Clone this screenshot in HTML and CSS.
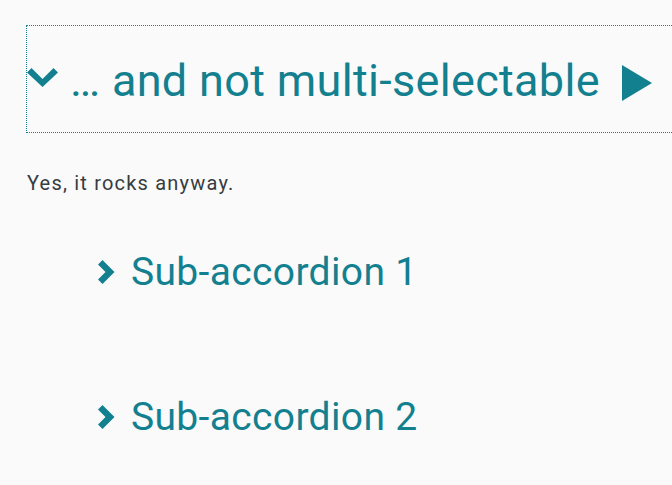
FILE: index.html
```html
<!DOCTYPE html>
<html>
<head>
<meta charset="utf-8">
<link rel="stylesheet" href="styles.css">
</head>
<body>
<div class="page">
  <div class="accordion">
    <h2 class="acc-header">
      <svg class="chev-down" width="31" height="19" viewBox="0 0 31 19"><path d="M0 4.5 L4.5 0 L15.5 11 L26.5 0 L31 4.5 L15.5 19 Z" fill="#13808f"/></svg>
      <span class="acc-title">… and not multi-selectable</span>
      <svg class="tri" width="30" height="36" viewBox="0 0 30 36"><path d="M0 0 L30 18 L0 36 Z" fill="#13808f"/></svg>
    </h2>
    <div class="acc-body">
      <p class="text">Yes, it rocks anyway.</p>
      <div class="sub">
        <h3 class="sub-header">
          <svg class="chev-right" width="17" height="24" viewBox="0 0 17 24"><path d="M0 4.5 L4.5 0 L16.5 12 L4.5 24 L0 19.5 L7.5 12 Z" fill="#13808f"/></svg>
          <span class="sub-title">Sub-accordion 1</span>
        </h3>
        <h3 class="sub-header">
          <svg class="chev-right" width="17" height="24" viewBox="0 0 17 24"><path d="M0 4.5 L4.5 0 L16.5 12 L4.5 24 L0 19.5 L7.5 12 Z" fill="#13808f"/></svg>
          <span class="sub-title">Sub-accordion 2</span>
        </h3>
      </div>
    </div>
  </div>
</div>
</body>
</html>
```
FILE: styles.css
```css
html, body {
  margin: 0;
  padding: 0;
  background: #fafafa;
  overflow: hidden;
}
body {
  font-family: Roboto, "Liberation Sans", sans-serif;
  color: #13808f;
}
.page {
  padding: 25px 0 0 26px;
  width: 700px;
}
.acc-header {
  margin: 0;
  border: 1px dotted #13808f;
  display: flex;
  align-items: flex-start;
  font-weight: 400;
  font-size: 45px;
  letter-spacing: 0.32px;
  line-height: 50px;
  padding: 30px 0 26px 0;
}
.chev-down {
  flex-shrink: 0;
  margin-top: 12px;
  margin-right: 12px;
}
.acc-title {
  white-space: nowrap;
}
.tri {
  flex-shrink: 0;
  margin-top: 9px;
  margin-left: 22px;
}
.acc-body {
  padding-top: 38px;
}
.text {
  margin: 0;
  font-size: 20px;
  letter-spacing: 1.2px;
  color: #373c41;
  line-height: 24px;
  padding-left: 1px;
}
.sub {
  padding-left: 72px;
  padding-top: 54px;
}
.sub-header {
  margin: 0 0 99px 0;
  font-size: 39px;
  letter-spacing: 0.35px;
  font-weight: 400;
  line-height: 46px;
  display: flex;
  align-items: center;
}
.chev-right {
  flex-shrink: 0;
  margin-right: 16px;
}
```
